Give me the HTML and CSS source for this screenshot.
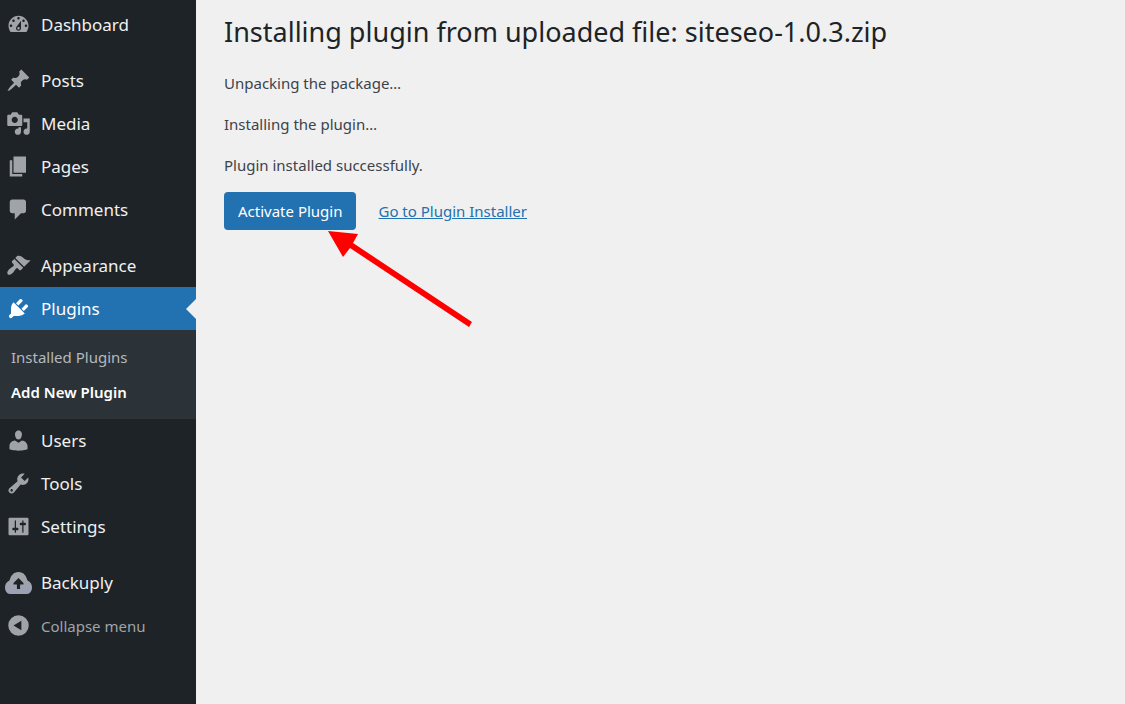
FILE: index.html
```html
<!DOCTYPE html>
<html lang="en">
<head>
<meta charset="utf-8">
<title>Installing plugin</title>
<link rel="stylesheet" href="styles.css">
</head>
<body>
<div class="layout">
  <nav class="sidebar" aria-label="Main menu">
    <ul class="menu">
      <li><a class="item" href="#"><svg class="icon" viewBox="0 0 20 20"><path d="M3.76 16h12.48c1.1-1.37 1.76-3.11 1.76-5 0-4.42-3.58-8-8-8s-8 3.58-8 8c0 1.89.66 3.63 1.76 5zM10 4c.55 0 1 .45 1 1s-.45 1-1 1-1-.45-1-1 .45-1 1-1zM6 6c.55 0 1 .45 1 1s-.45 1-1 1-1-.45-1-1 .45-1 1-1zm8 0c.55 0 1 .45 1 1s-.45 1-1 1-1-.45-1-1 .45-1 1-1zm-5.37 5.55L12 7v6c0 1.1-.9 2-2 2s-2-.9-2-2c0-.57.24-1.08.63-1.45zM4 10c.55 0 1 .45 1 1s-.45 1-1 1-1-.45-1-1 .45-1 1-1zm12 0c.55 0 1 .45 1 1s-.45 1-1 1-1-.45-1-1 .45-1 1-1zm-5 3c0-.55-.45-1-1-1s-1 .45-1 1 .45 1 1 1 1-.45 1-1z"/></svg><span>Dashboard</span></a></li>
      <li class="group"><a class="item" href="#"><svg class="icon" viewBox="0 0 20 20"><path d="M10.44 3.02l1.82-1.82 6.36 6.35-1.83 1.82c-1.05-.68-2.48-.57-3.41.36l-.75.75c-.92.93-1.04 2.35-.35 3.41l-1.83 1.82-2.41-2.41-2.8 2.79c-.42.42-3.38 2.71-3.8 2.29s1.86-3.39 2.28-3.81l2.79-2.79L4.1 9.36l1.83-1.82c1.05.69 2.48.57 3.4-.36l.75-.75c.93-.92 1.05-2.35.36-3.41z"/></svg><span>Posts</span></a></li>
      <li><a class="item" href="#"><svg class="icon" viewBox="0 0 20 20"><path d="M13 11V4c0-.55-.45-1-1-1h-1.67L9 1H5L3.67 3H2c-.55 0-1 .45-1 1v7c0 .55.45 1 1 1h10c.55 0 1-.45 1-1zM7 4.5c1.38 0 2.5 1.12 2.5 2.5S8.38 9.5 7 9.5 4.5 8.38 4.5 7 5.62 4.5 7 4.5zM14 6h5v10.5c0 1.38-1.12 2.5-2.5 2.5S14 17.88 14 16.5s1.12-2.5 2.5-2.5c.17 0 .34.02.5.05V9h-3V6zm-4 8.05V13h2v3.5c0 1.38-1.12 2.5-2.5 2.5S7 17.88 7 16.5 8.12 14 9.5 14c.17 0 .34.02.5.05z"/></svg><span>Media</span></a></li>
      <li><a class="item" href="#"><svg class="icon" viewBox="0 0 20 20"><path d="M6 15V2h10v13H6zm-1 1h8v2H3V5h2v11z"/></svg><span>Pages</span></a></li>
      <li><a class="item" href="#"><svg class="icon" viewBox="0 0 20 20"><path d="M5 2h9c1.1 0 2 .9 2 2v7c0 1.1-.9 2-2 2h-2l-5 5v-5H5c-1.1 0-2-.9-2-2V4c0-1.1.9-2 2-2z"/></svg><span>Comments</span></a></li>
      <li class="group"><a class="item" href="#"><svg class="icon" viewBox="0 0 20 20"><path d="M14.48 11.06L7.41 3.99l1.5-1.5c.5-.56 2.3-.47 3.51.32 1.21.8 1.43 1.28 2.91 2.1 1.18.64 2.45 1.26 4.45.85zm-.71.71L6.7 4.7 4.93 6.47c-.39.39-.39 1.02 0 1.41l1.06 1.06c.39.39.39 1.03 0 1.42-.6.6-1.43 1.11-2.21 1.69-.35.26-.7.53-1.01.84C1.43 14.23.4 16.08 1.4 17.07c.99 1 2.84-.03 4.18-1.36.31-.31.58-.66.85-1.02.57-.78 1.08-1.61 1.69-2.21.39-.39 1.02-.39 1.41 0l1.06 1.06c.39.39 1.02.39 1.41 0z"/></svg><span>Appearance</span></a></li>
      <li>
        <a class="item current" href="#"><svg class="icon" viewBox="0 0 20 20"><path d="M13.11 4.36L9.87 7.6 8 5.73l3.24-3.24c.35-.34 1.05-.2 1.56.32.52.51.66 1.21.31 1.55zm-8 1.77l.91-1.12 9.01 9.01-1.19.84c-.71.71-2.63 1.16-3.82 1.16H6.14L4.9 17.26c-.59.59-1.54.59-2.12 0-.59-.58-.59-1.53 0-2.12l1.24-1.24v-3.88c0-1.13.4-3.19 1.09-3.89zm7.26 3.97l3.24-3.24c.34-.35 1.04-.21 1.55.31.52.51.66 1.21.31 1.55l-3.24 3.25z"/></svg><span>Plugins</span></a>
        <ul class="submenu">
          <li><a class="subitem" href="#">Installed Plugins</a></li>
          <li><a class="subitem active" href="#" aria-current="page">Add New Plugin</a></li>
        </ul>
      </li>
      <li><a class="item" href="#"><svg class="icon" viewBox="0 0 20 20"><path d="M10 9.25c-2.27 0-2.73-3.44-2.73-3.44C7 4.02 7.82 2 9.97 2c2.16 0 2.98 2.02 2.71 3.81 0 0-.41 3.44-2.68 3.44zm0 2.57L12.72 10c2.39 0 4.52 2.33 4.52 4.53v2.49s-3.65 1.13-7.24 1.13c-3.65 0-7.24-1.13-7.24-1.13v-2.49c0-2.25 1.94-4.48 4.47-4.48z"/></svg><span>Users</span></a></li>
      <li><a class="item" href="#"><svg class="icon" viewBox="0 0 20 20"><path d="M16.68 9.77c-1.34 1.34-3.3 1.67-4.95.99l-5.41 6.52c-.99.99-2.59.99-3.58 0s-.99-2.59 0-3.57l6.52-5.42c-.68-1.65-.35-3.61.99-4.95 1.28-1.28 3.12-1.62 4.72-1.06l-2.89 2.89 2.82 2.82 2.86-2.87c.53 1.58.18 3.39-1.08 4.65zM3.81 16.21c.4.39 1.04.39 1.43 0 .4-.4.4-1.04 0-1.43-.39-.4-1.03-.4-1.43 0-.39.39-.39 1.03 0 1.43z"/></svg><span>Tools</span></a></li>
      <li><a class="item" href="#"><svg class="icon" viewBox="0 0 20 20"><path d="M18 16V4c0-.55-.45-1-1-1H3c-.55 0-1 .45-1 1v12c0 .55.45 1 1 1h14c.55 0 1-.45 1-1zM8 11h1c.55 0 1 .45 1 1s-.45 1-1 1H8v1.5c0 .28-.22.5-.5.5s-.5-.22-.5-.5V13H6c-.55 0-1-.45-1-1s.45-1 1-1h1V5.5c0-.28.22-.5.5-.5s.5.22.5.5V11zm5-2h-1c-.55 0-1-.45-1-1s.45-1 1-1h1V5.5c0-.28.22-.5.5-.5s.5.22.5.5V7h1c.55 0 1 .45 1 1s-.45 1-1 1h-1v5.5c0 .28-.22.5-.5.5s-.5-.22-.5-.5V9z"/></svg><span>Settings</span></a></li>
      <li class="group"><a class="item" href="#"><svg class="icon cloud" viewBox="0 0 27 27"><defs><linearGradient id="cloud" x1="0" y1="0" x2="0" y2="1"><stop offset="0" stop-color="#a2a5a9"/><stop offset="1" stop-color="#9aa1b4"/></linearGradient></defs><path fill="url(#cloud)" fill-rule="evenodd" d="M5 25C2 25 0 22 0 18.500c0-3.500 1.500-5.500 4.500-7C6 6.500 8.500 3 13.500 3s7.500 3.500 9 8.500c3 1.500 4.500 3.500 4.500 7 0 3.500-2 6.500-5 6.500zM13.500 9L8.500 14v1.500h3.400V20h3.200v-4.500h3.400V14z"/></svg><span>Backuply</span></a></li>
      <li><button class="item collapse" type="button"><svg class="icon" viewBox="0 0 20 20"><path fill-rule="evenodd" d="M10 1.800a8.200 8.200 0 1 0 0 16.400 8.200 8.200 0 0 0 0-16.400zM12.300 6.200v7.600L6 10z"/></svg><span>Collapse menu</span></button></li>
    </ul>
  </nav>
  <main class="content">
    <h1 class="title">Installing plugin from uploaded file: siteseo-1.0.3.zip</h1>
    <p class="status">Unpacking the package…</p>
    <p class="status">Installing the plugin…</p>
    <p class="status">Plugin installed successfully.</p>
    <div class="actions">
      <button class="primary" type="button">Activate Plugin</button>
      <a class="link" href="#">Go to Plugin Installer</a>
      <svg class="arrow" viewBox="0 0 144 97" aria-hidden="true"><path d="M0 1L30 4 25 13 144 92 141 97 22 18 15 27z" fill="#f00"/></svg>
    </div>
  </main>
</div>
</body>
</html>
```
FILE: styles.css
```css
* {
  box-sizing: border-box;
}

body {
  margin: 0;
  background: #f0f0f0;
  color: #3c434a;
  font-family: "Segoe UI", "Noto Sans", "Open Sans", sans-serif;
  font-size: 15px;
  line-height: 24px;
}

.layout {
  display: flex;
  min-height: 100vh;
}

.sidebar {
  flex: 0 0 196px;
  padding-top: 3px;
  background: #1d2327;
}

.menu,
.submenu {
  margin: 0;
  padding: 0;
  list-style: none;
}

.group {
  margin-top: 13px;
}

.item {
  position: relative;
  display: flex;
  align-items: center;
  gap: 10px;
  width: 100%;
  height: 43px;
  padding: 0 6px;
  border: 0;
  background: none;
  color: #f0f0f1;
  font: inherit;
  font-size: 17px;
  text-decoration: none;
}

.icon {
  flex: none;
  width: 25px;
  height: 25px;
  fill: #a0a4a9;
}

.cloud {
  width: 27px;
  height: 27px;
  margin: 0 -1px;
}

.current {
  background: #2271b1;
  color: #fff;
}

.current .icon {
  fill: #fff;
}

.current::after {
  content: "";
  position: absolute;
  top: 50%;
  right: 0;
  border: 10px solid transparent;
  border-left-width: 0;
  border-right-color: #f0f0f0;
  transform: translateY(-50%);
}

.submenu {
  padding: 9px 0 10px;
  background: #2c3338;
}

.subitem {
  display: block;
  padding: 6px 11px 5px;
  color: #b4b9be;
  text-decoration: none;
}

.active {
  color: #fff;
  font-weight: 600;
}

.collapse {
  color: #a0a4a9;
  font-size: 15px;
}

.content {
  flex: 1;
  min-width: 0;
  padding: 12px 28px;
}

.title {
  margin: 0 0 19px;
  color: #1d2327;
  font-size: 27px;
  font-weight: 400;
  line-height: 40px;
}

.status {
  margin: 0 0 17px;
}

.actions {
  position: relative;
  display: flex;
  align-items: center;
  gap: 22px;
  margin-top: -2px;
}

.primary {
  height: 38px;
  padding: 0 14px;
  border: 0;
  border-radius: 4px;
  background: #2271b1;
  color: #fff;
  font: inherit;
}

.link {
  color: #2271b1;
}

.arrow {
  position: absolute;
  top: 38px;
  left: 104px;
  width: 144px;
  height: 97px;
}
```
